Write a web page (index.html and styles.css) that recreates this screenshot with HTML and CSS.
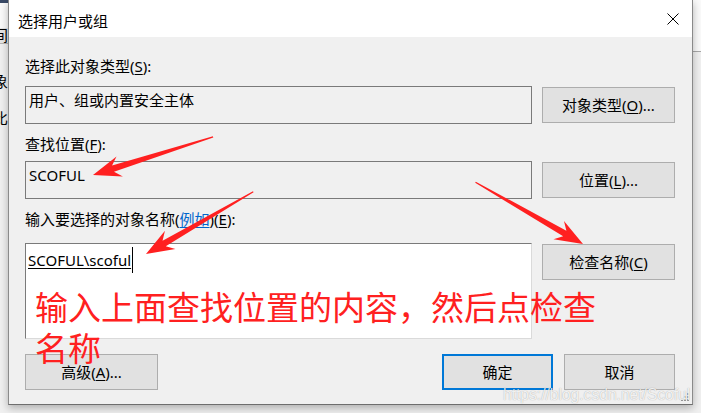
FILE: index.html
```html
<!DOCTYPE html>
<html lang="zh-CN">
<head>
<meta charset="utf-8">
<title>选择用户或组</title>
<link rel="stylesheet" href="styles.css">
</head>
<body>
<div class="screen">
  <div class="bg-left">
    <div class="bl-top"></div>
    <div class="bl-white"></div>
    <div class="bl-cell"><span>间</span></div>
    <div class="bl-row bl-r1"><span>象</span></div>
    <div class="bl-row bl-r2"><span>比</span></div>
  </div>

  <div class="dialog">
    <div class="titlebar">
      <span class="title">选择用户或组</span>
      <svg class="close" width="12" height="12" viewBox="0 0 12 12" aria-hidden="true">
        <path d="M0.5 0.5 L11.5 11.5 M11.5 0.5 L0.5 11.5" stroke="#000" stroke-width="1" fill="none"/>
      </svg>
    </div>
    <div class="body">
      <div class="label">选择此对象类型(<u>S</u>):</div>
      <div class="field-row row-gap-1">
        <div class="box">用户、组或内置安全主体</div>
        <div class="btn">对象类型(<u>O</u>)...</div>
      </div>

      <div class="label label-2">查找位置(<u>F</u>):</div>
      <div class="field-row row-gap-2">
        <div class="box">SCOFUL</div>
        <div class="btn">位置(<u>L</u>)...</div>
      </div>

      <div class="label label-3">输入要选择的对象名称(<span class="link">例如</span>)(<u>E</u>):</div>
      <div class="field-row row-gap-3">
        <div class="box box-edit"><span class="resolved">SCOFUL\scoful</span><span class="caret"></span></div>
        <div class="btn">检查名称(<u>C</u>)</div>
      </div>

      <div class="bottom-row">
        <div class="btn">高级(<u>A</u>)...</div>
        <div class="btn-group">
          <div class="btn btn-sm btn-default">确定</div>
          <div class="btn btn-sm">取消</div>
        </div>
      </div>
    </div>
  </div>

  <div class="bg-right"><div class="br-top"></div></div>

  <div class="annot">
    <svg class="arrows" width="701" height="413" viewBox="0 0 701 413" aria-hidden="true">
      <g fill="#ff2020">
        <polygon transform="translate(93 175) rotate(162.4)" points="0,0 -28,-10.5 -21,-3.2 -126,-0.6 -126,0.6 -21,3.2 -28,10.5"/>
        <polygon transform="translate(146 254) rotate(149.9)" points="0,0 -28,-10.5 -21,-3.2 -124,-0.6 -124,0.6 -21,3.2 -28,10.5"/>
        <polygon transform="translate(583 244) rotate(29.9)" points="0,0 -28,-10.5 -21,-3.2 -124,-0.6 -124,0.6 -21,3.2 -28,10.5"/>
      </g>
      <g fill="#9a9a9a">
        <rect x="687" y="393" width="2" height="2"/>
        <rect x="684" y="396" width="2" height="2"/>
        <rect x="687" y="396" width="2" height="2"/>
        <rect x="681" y="399" width="2" height="2"/>
        <rect x="684" y="399" width="2" height="2"/>
        <rect x="687" y="399" width="2" height="2"/>
      </g>
    </svg>
    <div class="note">输入上面查找位置的内容，然后点检查名称</div>
    <div class="watermark">https://blog.csdn.net/Scoful</div>
  </div>
</div>
</body>
</html>
```

FILE: styles.css
```css
html, body {
  margin: 0;
  padding: 0;
}

body {
  background: #f0f0f0;
  font-family: "Noto Sans", "Noto Sans CJK SC", sans-serif;
  font-size: 15px;
  color: #000;
}

u {
  text-decoration: underline;
  text-underline-offset: 2px;
}

.screen {
  position: relative;
  display: flex;
  width: 701px;
  height: 413px;
  overflow: hidden;
  background: #f0f0f0;
}

/* background window, left strip */
.bg-left {
  width: 8px;
  flex: none;
  display: flex;
  flex-direction: column;
  overflow: hidden;
}

.bl-top {
  height: 3px;
  background: #3a4a66;
}

.bl-white {
  height: 25px;
  background: #fafafa;
}

.bl-cell {
  height: 15px;
  background: #e6e6e6;
  border-bottom: 1px solid #b4b4b4;
  display: flex;
  justify-content: flex-end;
  overflow: hidden;
  line-height: 15px;
}

.bl-row {
  display: flex;
  justify-content: flex-end;
  overflow: hidden;
  line-height: 20px;
  flex: none;
}

.bl-r1 { margin-top: 27px; }
.bl-r2 { margin-top: 17px; }

/* dialog */
.dialog {
  flex: none;
  width: 685px;
  height: 405px;
  box-sizing: border-box;
  background: #f0f0f0;
  border-left: 1px solid #8a8a8a;
  border-right: 1px solid #8a8a8a;
  border-bottom: 1px solid #6e6e6e;
  box-shadow: 0 3px 8px rgba(0, 0, 0, 0.28);
  display: flex;
  flex-direction: column;
  position: relative;
  z-index: 1;
}

.titlebar {
  height: 37px;
  flex: none;
  background: #fff;
  display: flex;
  justify-content: space-between;
  align-items: flex-start;
  padding-left: 9px;
}

.title {
  line-height: 20px;
  padding-top: 11px;
}

.close {
  margin-top: 13px;
  margin-right: 13px;
}

.body {
  padding: 19px 17px 14px 16px;
  display: flex;
  flex-direction: column;
}

.label {
  line-height: 20px;
  height: 20px;
  white-space: nowrap;
}

.label-2 { margin-top: 10px; }
.label-3 { margin-top: 10px; }

.link {
  color: #0066cc;
  text-decoration: underline;
  text-underline-offset: 2px;
}

.field-row {
  display: flex;
  gap: 10px;
  align-items: flex-start;
}

.row-gap-1 { margin-top: 10px; }
.row-gap-2 { margin-top: 7px; }
.row-gap-3 { margin-top: 14px; }

.box {
  width: 507px;
  height: 38px;
  box-sizing: border-box;
  border: 1px solid #7a7a7a;
  padding: 3px 3px;
  line-height: 20px;
  white-space: nowrap;
}

.box-edit {
  height: 96px;
  background: #fff;
  border-color: #7a7a7a #dadada #dadada #7a7a7a;
  padding: 3px 2px;
  line-height: 26px;
}

.resolved {
  text-decoration: underline;
  text-underline-offset: 2px;
}

.caret {
  display: inline-block;
  width: 1px;
  height: 26px;
  background: #000;
  vertical-align: top;
  margin-left: 1px;
}

.btn {
  width: 133px;
  height: 36px;
  margin-top: 1px;
  box-sizing: border-box;
  border: 1px solid #adadad;
  background: #e1e1e1;
  display: flex;
  align-items: center;
  justify-content: center;
  line-height: 20px;
  white-space: nowrap;
  flex: none;
}

.bottom-row {
  margin-top: 15px;
  display: flex;
  justify-content: space-between;
  align-items: flex-start;
}

.bottom-row .btn {
  margin-top: 0;
}

.btn-group {
  display: flex;
  gap: 11px;
}

.btn-sm {
  width: 111px;
}

.btn-default {
  border: 2px solid #0078d7;
}

/* background window, right strip */
.bg-right {
  flex: 1;
  display: flex;
  flex-direction: column;
}

.br-top {
  height: 51px;
  background: #fafafa;
  border-bottom: 1px solid #a8a8a8;
}

/* annotations drawn over the screenshot */
.annot {
  position: absolute;
  inset: 0;
  z-index: 5;
  pointer-events: none;
}

.arrows {
  position: absolute;
  left: 0;
  top: 0;
}

.note {
  position: absolute;
  left: 35px;
  top: 287px;
  width: 580px;
  font-size: 33px;
  line-height: 41px;
  color: #ff2020;
}

.watermark {
  position: absolute;
  left: 503px;
  top: 386px;
  font-family: "Liberation Sans", Arial, sans-serif;
  font-size: 15.6px;
  line-height: 18px;
  color: rgba(255, 255, 255, 0.85);
  text-shadow: 0 0 1px rgba(0, 0, 0, 0.35);
  white-space: nowrap;
}
```
